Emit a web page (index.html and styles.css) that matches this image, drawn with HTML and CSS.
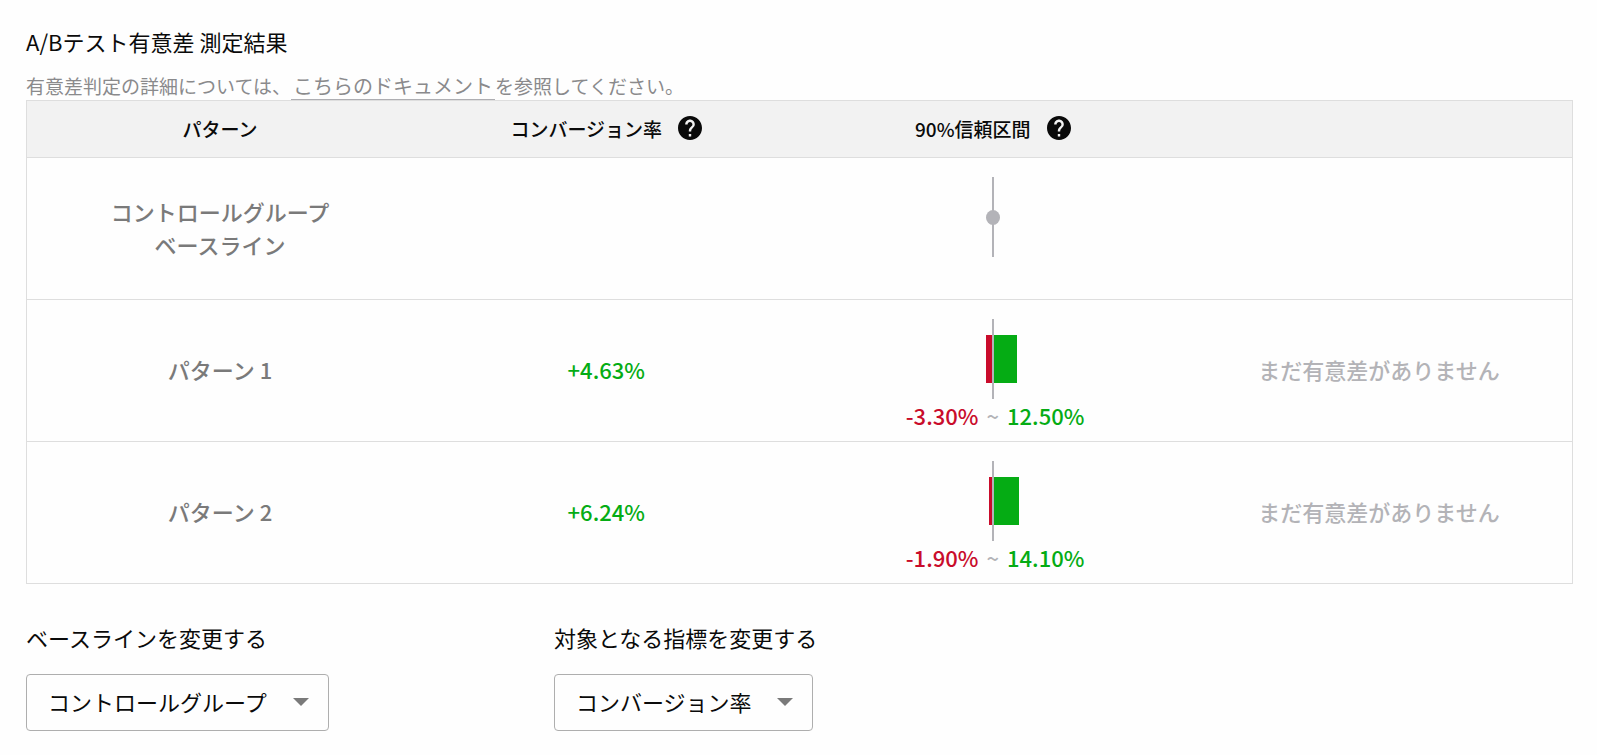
FILE: index.html
```html
<!DOCTYPE html>
<html lang="ja">
<head>
    <meta charset="UTF-8">
    <meta name="viewport" content="width=device-width, initial-scale=1.0">
    <title>A/Bテスト有意差 測定結果</title>
    <link rel="stylesheet" href="styles.css">
</head>
<body>
    <div class="container">
        <h1>A/Bテスト有意差 測定結果</h1>
        <p class="note">有意差判定の詳細については、<a href="#">こちらのドキュメント</a>を参照してください。</p>

        <table class="results">
            <thead>
                <tr>
                    <th>パターン</th>
                    <th>
                        <div class="heading">
                            <span>コンバージョン率</span>
                            <button class="help" type="button" aria-label="コンバージョン率について">
                                <svg viewBox="2 2 20 20"><path d="M12 2C6.48 2 2 6.48 2 12s4.48 10 10 10 10-4.48 10-10S17.52 2 12 2zm1 17h-2v-2h2v2zm2.07-7.75l-.9.92C13.45 12.9 13 13.5 13 15h-2v-.5c0-1.1.45-2.1 1.17-2.83l1.24-1.26c.37-.36.59-.86.59-1.41 0-1.1-.9-2-2-2s-2 .9-2 2H8c0-2.21 1.79-4 4-4s4 1.79 4 4c0 .88-.36 1.68-.93 2.25z"/></svg>
                            </button>
                        </div>
                    </th>
                    <th>
                        <div class="heading">
                            <span>90%信頼区間</span>
                            <button class="help" type="button" aria-label="90%信頼区間について">
                                <svg viewBox="2 2 20 20"><path d="M12 2C6.48 2 2 6.48 2 12s4.48 10 10 10 10-4.48 10-10S17.52 2 12 2zm1 17h-2v-2h2v2zm2.07-7.75l-.9.92C13.45 12.9 13 13.5 13 15h-2v-.5c0-1.1.45-2.1 1.17-2.83l1.24-1.26c.37-.36.59-.86.59-1.41 0-1.1-.9-2-2-2s-2 .9-2 2H8c0-2.21 1.79-4 4-4s4 1.79 4 4c0 .88-.36 1.68-.93 2.25z"/></svg>
                            </button>
                        </div>
                    </th>
                    <td></td>
                </tr>
            </thead>
            <tbody>
                <tr>
                    <td class="name">コントロールグループ<br>ベースライン</td>
                    <td></td>
                    <td class="interval">
                        <div class="chart"><span class="dot"></span></div>
                    </td>
                    <td></td>
                </tr>
                <tr>
                    <td class="name">パターン 1</td>
                    <td class="plus">+4.63%</td>
                    <td class="interval">
                        <div class="chart">
                            <div class="half lower"><div class="bar" style="width: 7px"></div></div>
                            <div class="half upper"><div class="bar" style="width: 24px"></div></div>
                        </div>
                        <div class="range">
                            <span class="minus">-3.30%</span>
                            <span class="tilde">~</span>
                            <span class="plus">12.50%</span>
                        </div>
                    </td>
                    <td class="verdict">まだ有意差がありません</td>
                </tr>
                <tr>
                    <td class="name">パターン 2</td>
                    <td class="plus">+6.24%</td>
                    <td class="interval">
                        <div class="chart">
                            <div class="half lower"><div class="bar" style="width: 4px"></div></div>
                            <div class="half upper"><div class="bar" style="width: 26px"></div></div>
                        </div>
                        <div class="range">
                            <span class="minus">-1.90%</span>
                            <span class="tilde">~</span>
                            <span class="plus">14.10%</span>
                        </div>
                    </td>
                    <td class="verdict">まだ有意差がありません</td>
                </tr>
            </tbody>
        </table>

        <div class="settings">
            <div class="field">
                <label for="baseline">ベースラインを変更する</label>
                <div class="select">
                    <select id="baseline">
                        <option selected>コントロールグループ</option>
                        <option>パターン 1</option>
                        <option>パターン 2</option>
                    </select>
                </div>
            </div>
            <div class="field">
                <label for="metric">対象となる指標を変更する</label>
                <div class="select">
                    <select id="metric">
                        <option selected>コンバージョン率</option>
                    </select>
                </div>
            </div>
        </div>
    </div>
</body>
</html>
```
FILE: styles.css
```css
* {
    box-sizing: border-box;
}
body {
    font-family: "Noto Sans CJK JP", sans-serif;
    font-size: 22px;
    line-height: 33px;
    background-color: #fefefe;
    color: #0a0a0a;
    margin: 0;
}
.container {
    padding: 25px 24px 24px 26px;
}
h1 {
    font-size: 22px;
    font-weight: 400;
    margin: 0 0 14px;
}
.note {
    font-size: 19px;
    line-height: 28px;
    color: #8a8a8c;
    margin: 0;
}
.note a {
    font-size: 20px;
    color: inherit;
    text-decoration: none;
    padding: 0 2px;
    position: relative;
}
/* link underline runs over the table's top border */
.note a::after {
    content: "";
    position: absolute;
    left: 0;
    right: 0;
    bottom: 0;
    border-bottom: 1px solid #aeaeb2;
}
.results {
    width: 100%;
    table-layout: fixed;
    border-collapse: collapse;
    border: 1px solid #dedede;
    font-weight: 500;
    text-align: center;
}
.results tr {
    border-bottom: 1px solid #dedede;
}
.results th,
.results td {
    padding: 0 0 2px;
}
.results thead tr {
    height: 57px;
    background-color: #f2f2f2;
}
.results tbody tr {
    height: 142px;
}
.results th {
    font-size: 19px;
    font-weight: 500;
}
.heading {
    display: flex;
    align-items: center;
    justify-content: center;
    gap: 16px;
}
.help {
    width: 24px;
    height: 24px;
    padding: 0;
    border: none;
    background: none;
    cursor: pointer;
}
.help svg {
    display: block;
    width: 24px;
    height: 24px;
    fill: #0a0a0a;
}
.name {
    color: #7a7a7a;
}
.plus {
    color: #05ac14;
}
.minus {
    color: #c90c2b;
}
.tilde,
.verdict {
    color: #b3b3b7;
}
.results .interval {
    vertical-align: top;
    padding-top: 19px;
}
.chart {
    position: relative;
    display: flex;
    align-items: center;
    justify-content: center;
    height: 80px;
}
.chart::after {
    content: "";
    position: absolute;
    top: 0;
    bottom: 0;
    left: calc(50% - 1px);
    width: 2px;
    background-color: #b3b3b8;
}
.dot {
    width: 14px;
    height: 15px;
    border-radius: 50%;
    background-color: #b3b3b8;
}
.half {
    flex: 1;
    display: flex;
}
.lower {
    justify-content: flex-end;
}
.bar {
    height: 48px;
}
.lower .bar {
    background-color: #c90c2b;
}
.upper .bar {
    background-color: #05ac14;
}
.range {
    display: grid;
    grid-template-columns: 1fr auto 1fr;
    gap: 8px;
}
.range .minus {
    text-align: right;
}
.range .plus {
    text-align: left;
}
.settings {
    display: flex;
    gap: 225px;
    margin-top: 37px;
}
.field {
    display: flex;
    flex-direction: column;
    align-items: flex-start;
    gap: 20px;
}
.select {
    position: relative;
}
.select::after {
    content: "";
    position: absolute;
    top: 24px;
    right: 20px;
    border: 8px solid transparent;
    border-top-color: #7a7a7a;
    border-bottom: none;
    pointer-events: none;
}
select {
    appearance: none;
    display: block;
    height: 57px;
    padding: 0 59px 4px 21px;
    border: 1px solid #aeaeae;
    border-radius: 4px;
    background-color: #fefefe;
    color: #0a0a0a;
    font-family: inherit;
    font-size: 22px;
}
```
